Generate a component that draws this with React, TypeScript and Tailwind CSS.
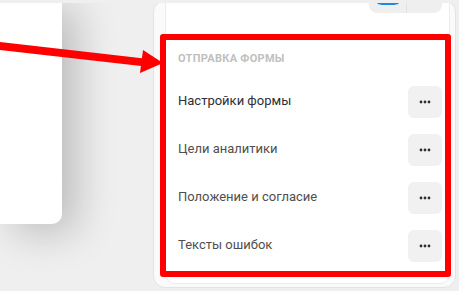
import React from "react";

const Dots = () => (
  <svg width="12" height="4" viewBox="0 0 12 4">
    <circle cx="2" cy="2" r="1.4" fill="#2f2f2f" />
    <circle cx="6" cy="2" r="1.4" fill="#2f2f2f" />
    <circle cx="10" cy="2" r="1.4" fill="#2f2f2f" />
  </svg>
);

const Row = ({ label, dark }: { label: string; dark?: boolean }) => (
  <div className="flex h-[48px] items-center justify-between pl-[12px] pr-[7px]">
    <span className={"-mt-[2px] text-[13px] leading-[16px] " + (dark ? "text-[#2e2e38]" : "text-[#4f4f4f]")}>{label}</span>
    <button className="flex h-[32px] w-[34px] items-center justify-center rounded-[6px] bg-[#f1f1f1]">
      <Dots />
    </button>
  </div>
);

export default function App() {
  return (
    <div
      className="relative h-[291px] w-[459px] overflow-hidden bg-[#efefef]"
      style={{ fontFamily: "Roboto, Inter, 'Noto Sans', sans-serif" }}
    >
      <div className="flex items-start">
        <div className="h-[224px] w-[62px] shrink-0 rounded-br-[10px] bg-white shadow-[14px_8px_40px_rgba(0,0,0,0.22)]" />
        <div className="ml-[91px] h-[288px] w-[303px] shrink-0 overflow-hidden rounded-[12px] border border-[#e3e3e3] bg-[#fafafa]">
          <div className="-mt-[41px] ml-[11px] h-[324px] w-[285px] rounded-[10px] border border-[#ebebeb] bg-white">
            <div className="flex justify-end pr-[7px] pt-[20px]">
              <div className="flex h-[32px] items-start rounded-[8px] bg-[#efefef]">
                <div className="flex w-[37px] justify-center pt-[6px]">
                  <div className="h-[18px] w-[30px] rounded-full bg-[#1e88e5]" />
                </div>
                <div className="h-[32px] w-px bg-[#e2e2e2]" />
                <div className="w-[35px]" />
              </div>
            </div>
            <div className="mt-[39px] pl-[12px] text-[11px] font-bold uppercase leading-[14px] tracking-[0.3px] text-[#c0c0c0]">
              Отправка формы
            </div>
            <div className="mt-[12px]">
              <Row label="Настройки формы" dark />
              <Row label="Цели аналитики" />
              <Row label="Положение и согласие" />
              <Row label="Тексты ошибок" />
            </div>
          </div>
        </div>
      </div>
      <div className="absolute left-0 top-0 h-[3px] w-full bg-[#efefef]" />
      <div className="absolute left-[160px] top-[34px] h-[243px] w-[291px] rounded-[3px] border-[6px] border-[#ff0000]" />
      <svg className="absolute left-0 top-0" width="459" height="291" viewBox="0 0 459 291">
        <line x1="-5" y1="45.4" x2="146" y2="62.6" stroke="#ff0000" strokeWidth="8" />
        <polygon points="143,50 140,73 163,63" fill="#ff0000" />
      </svg>
    </div>
  );
}
